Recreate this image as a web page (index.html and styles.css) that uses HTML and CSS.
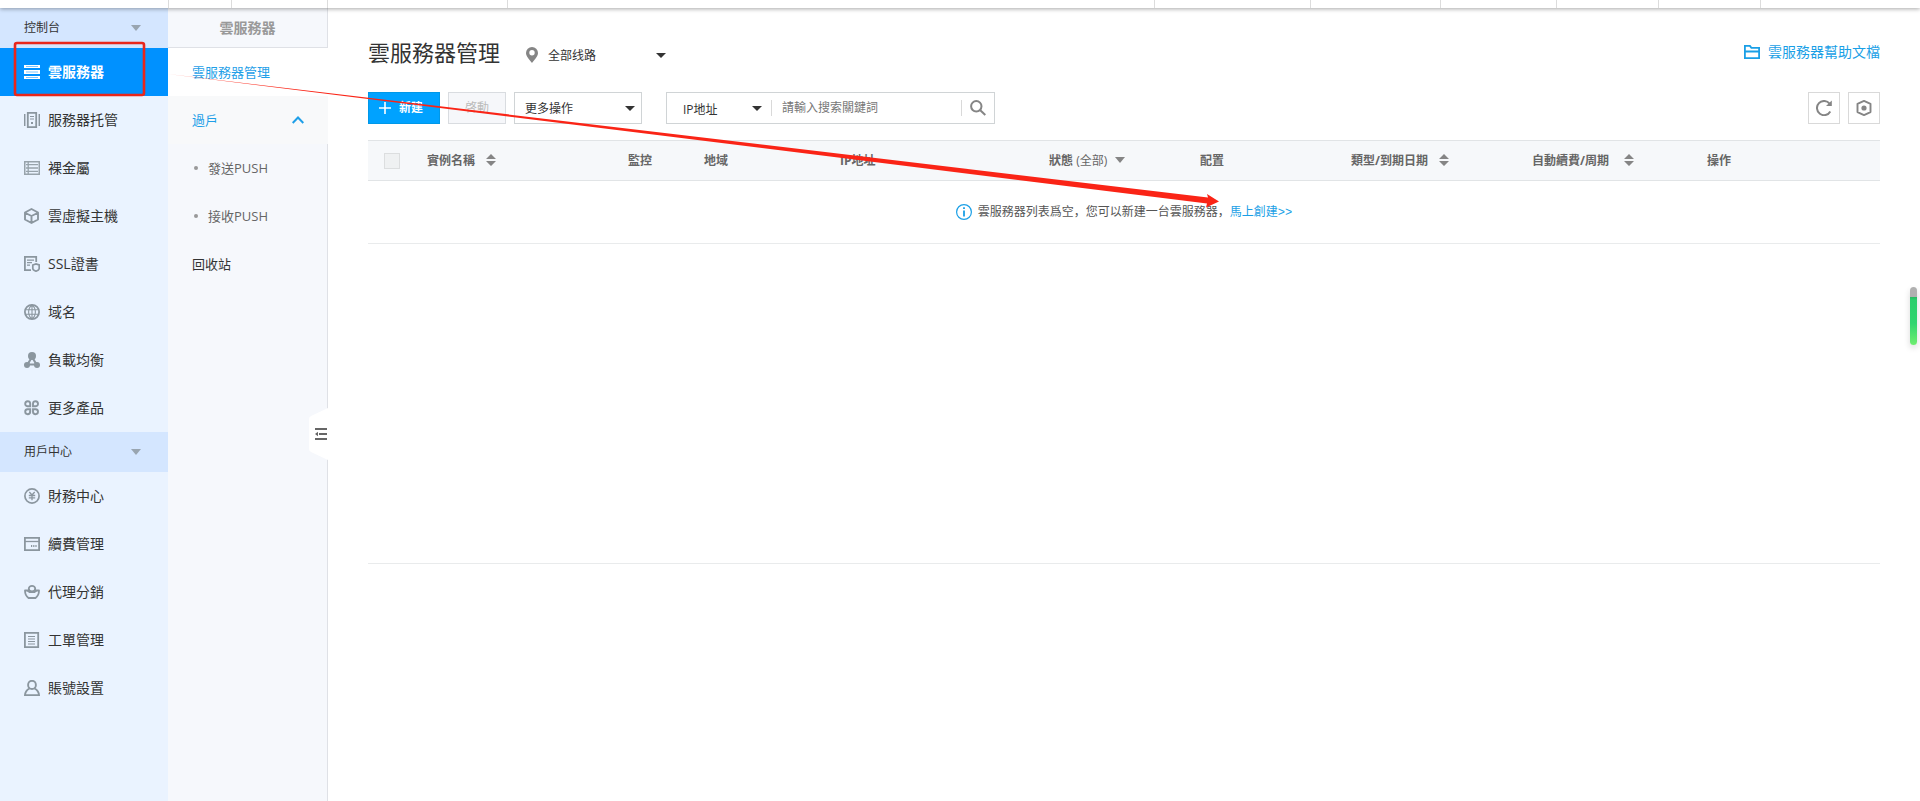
FILE: index.html
```html
<!DOCTYPE html>
<html lang="zh-Hans">
<head>
<meta charset="utf-8">
<title>雲服務器管理</title>
<link rel="stylesheet" href="styles.css">
</head>
<body>
<header class="topbar"><i></i><i></i><i></i><i></i><i></i><i></i><i></i><i></i><i></i><i></i></header>
<div class="shell">
  <nav class="sidebar" aria-label="控制台">
    <button class="group" type="button">控制台<svg width="10" height="6" viewBox="0 0 10 6"><path d="M0 0h10L5 6z"/></svg></button>
    <a class="item active" href="#"><svg class="ico" viewBox="0 0 16 16"><path fill="#fff" d="M0 1h16v3H0zM0 6h16v4H0zM0 12h16v3H0z"/><path stroke="#7cc5ff" d="M2 2.500h12M2 8h12M2 13.500h12"/></svg>雲服務器</a>
    <a class="item" href="#"><svg class="ico" viewBox="0 0 16 16"><path stroke-width="1.500" d="M.7 2v12M15.300 2v12"/><path stroke-width="1.800" d="M3.800.8h8.400v14.400H3.800z"/><path stroke-width="1.200" d="M6 4.500h4M6 7h4"/><path fill="#8b969f" stroke="none" d="M7 10h2v2H7z"/></svg>服務器托管</a>
    <a class="item" href="#"><svg class="ico" viewBox="0 0 16 16"><path stroke="#98a3ab" stroke-width="1.600" d="M.7 1.700h14.600v12.600H.7z"/><path stroke="#98a3ab" stroke-width="1.300" d="M2 4.700h12M2 8h12M2 11.300h12M4.200 2v12"/></svg>裸金屬</a>
    <a class="item" href="#"><svg class="ico" viewBox="0 0 16 16"><path stroke-width="1.900" stroke-linejoin="round" d="M7.500 1l6.500 3.500v7L7.500 15 1 11.500v-7zM1.500 5l6 3 6-3M7.500 8v6.500"/></svg>雲虛擬主機</a>
    <a class="item" href="#"><svg class="ico" viewBox="0 0 16 16"><path stroke-width="1.800" d="M12.200 6V.9H.9v13.300H7"/><path stroke-width="1.200" d="M3 4.200h7M3 6.700h5M3 9.200h3"/><path stroke-width="1.700" d="M8.800 9l3.200-1 3.200 1v3.500c0 1.200-1.200 2-3.200 2.700-2-.7-3.200-1.500-3.200-2.700z"/></svg>SSL證書</a>
    <a class="item" href="#"><svg class="ico" viewBox="0 0 16 16"><circle cx="8" cy="8" r="7.100" stroke-width="1.800"/><path stroke-width="1.100" d="M1 5.700h14M1 10.300h14M8 1v14M8 1C3.500 4.500 3.500 11.500 8 15M8 1c4.500 3.500 4.500 10.500 0 14"/></svg>域名</a>
    <a class="item" href="#"><svg class="ico" viewBox="0 0 16 16"><path stroke-width="2.100" d="M8 5L3.500 12.500h9z"/><g fill="#8b969f" stroke="none"><circle cx="8" cy="4" r="4"/><circle cx="3" cy="13" r="3"/><circle cx="13" cy="13" r="3"/></g></svg>負載均衡</a>
    <a class="item" href="#"><svg class="ico" viewBox="0 0 16 16"><path stroke-width="1.900" d="M6.200 6.200H3.500a2.500 2.500 0 1 1 2.700-2.700zM9 6.200V3.500a2.500 2.500 0 1 1 2.700 2.700zM6.200 9.200v2.700a2.500 2.500 0 1 1-2.700-2.700zM9 9.200h2.700A2.500 2.500 0 1 1 9 11.900z"/></svg>更多產品</a>
    <button class="group" type="button">用戶中心<svg width="10" height="6" viewBox="0 0 10 6"><path d="M0 0h10L5 6z"/></svg></button>
    <a class="item" href="#"><svg class="ico" viewBox="0 0 16 16"><circle cx="8" cy="8" r="7.100" stroke-width="1.700"/><path stroke-width="1.300" d="M5.300 4L8 7l2.700-3M8 7v5.300M4.800 7.500h6.400M4.800 9.800h6.400"/></svg>財務中心</a>
    <a class="item" href="#"><svg class="ico" viewBox="0 0 16 16"><path stroke-width="1.800" d="M.9 1.900h14.200v12.200H.9z"/><path stroke-width="1.300" d="M1 5.500h14"/><path stroke-width="1.800" stroke-dasharray="1.200 1" d="M7 10h6"/></svg>續費管理</a>
    <a class="item" href="#"><svg class="ico" viewBox="0 0 16 16"><path stroke-width="1.800" stroke-linejoin="round" d="M4.500 6.500H1c0 4 1.500 6 3.500 7.500h7c2-1.500 3.500-3.500 3.500-7.500h-3.500"/><path stroke-width="1.800" d="M8 1.800a3.200 2.800 0 1 1 0 5.600 3.200 2.800 0 1 1 0-5.600M3.500 6.500l2 1.500h5l2-1.500"/></svg>代理分銷</a>
    <a class="item" href="#"><svg class="ico" viewBox="0 0 16 16"><path stroke-width="1.800" d="M.9.900h13.300v14.200H.9z"/><path stroke-width="1.200" d="M4 4.500h7M4 7h7M4 9.500h7M4 12h7"/></svg>工單管理</a>
    <a class="item" href="#"><svg class="ico" viewBox="0 0 16 16"><ellipse cx="8" cy="4.900" rx="3.900" ry="4.100" stroke-width="1.900"/><path stroke-width="1.900" d="M5.500 8.500C2.500 10 1.200 12 1 15.100h14c-.2-3.100-1.500-5.100-4.500-6.600"/></svg>賬號設置</a>
  </nav>

  <nav class="subnav" aria-label="雲服務器">
    <h2 class="subnav-title">雲服務器</h2>
    <a class="sub current" href="#">雲服務器管理</a>
    <button class="sub open" type="button">過戶<svg width="12" height="8" viewBox="0 0 12 8"><path fill="none" stroke="#1f9fe8" stroke-width="2" d="M.7 7L6 1.500 11.300 7"/></svg></button>
    <a class="sub child" href="#">發送PUSH</a>
    <a class="sub child" href="#">接收PUSH</a>
    <a class="sub" href="#">回收站</a>
    <button class="collapse" type="button" aria-label="收起"><svg width="19" height="52" viewBox="0 0 19 52"><path fill="#fff" d="M19 0L2 8Q0 9 0 11v30q0 2 2 3l17 8z"/><path stroke="#666" stroke-width="1.800" d="M6 21h12M10 26h8M6 31h12"/><path fill="#666" d="M6 26l3-2.200v4.400z"/></svg></button>
  </nav>

  <main class="main">
    <div class="heading">
      <h1>雲服務器管理</h1>
      <div class="route">
        <svg width="12" height="16" viewBox="0 0 12 16"><path fill="#858585" fill-rule="evenodd" d="M6 0a6 6 0 0 1 6 6c0 3-3.500 7-6 10C3.500 13 0 9 0 6a6 6 0 0 1 6-6zm0 3a2.700 2.700 0 1 0 0 5.400A2.700 2.700 0 0 0 6 3z"/></svg>
        <div class="pick"><select aria-label="线路"><option>全部线路</option></select><svg width="10" height="5" viewBox="0 0 10 5"><path d="M0 0h10L5 5z"/></svg></div>
      </div>
      <a class="help" href="#"><svg width="16" height="14" viewBox="0 0 16 14"><path fill="none" stroke="#1a9fe6" stroke-width="1.800" d="M.9.900h5l1.500 2h7.700v10.200H.9zM1 6.500h14"/></svg>雲服務器幫助文檔</a>
    </div>

    <div class="toolbar">
      <button class="btn primary" type="button"><svg width="12" height="12" viewBox="0 0 12 12"><path stroke="#fff" stroke-width="1.600" d="M6 0v12M0 6h12"/></svg>新建</button>
      <button class="btn disabled" type="button" disabled>啓動</button>
      <div class="pick more"><select aria-label="更多操作"><option>更多操作</option></select><svg width="10" height="5" viewBox="0 0 10 5"><path d="M0 0h10L5 5z"/></svg></div>
      <form class="search">
        <div class="pick field"><select aria-label="搜索字段"><option>IP地址</option></select><svg width="10" height="5" viewBox="0 0 10 5"><path d="M0 0h10L5 5z"/></svg></div>
        <input type="text" aria-label="搜索" placeholder="請輸入搜索關鍵詞">
        <button type="button" aria-label="搜索"><svg width="16" height="16" viewBox="0 0 16 16"><g fill="none" stroke="#858585" stroke-width="2"><circle cx="6.300" cy="6.300" r="5.200"/><path d="M10 10l5.300 5"/></g></svg></button>
      </form>
      <div class="tools">
        <button type="button" aria-label="刷新"><svg width="16" height="16" viewBox="0 0 16 16"><path fill="none" stroke="#858585" stroke-width="2" d="M13.600 3.600A7.100 7.100 0 1 0 14.300 11.500"/><path fill="#858585" d="M15.800.5v5.500H10z"/></svg></button>
        <button type="button" aria-label="設置"><svg width="16" height="16" viewBox="0 0 16 16"><path fill="none" stroke="#858585" stroke-width="1.900" stroke-linejoin="round" d="M8 .9l6.500 3v8.200l-6.500 3-6.500-3V3.900z"/><circle cx="8" cy="8" r="2.600" fill="#858585"/></svg></button>
      </div>
    </div>

    <section class="panel">
      <table>
        <colgroup><col class="c1"><col class="c2"><col class="c3"><col class="c4"><col class="c5"><col class="c6"><col class="c7"><col class="c8"><col class="c9"><col></colgroup>
        <thead>
          <tr>
            <th><input type="checkbox" aria-label="全選" disabled></th>
            <th>實例名稱<svg class="sort" width="10" height="12" viewBox="0 0 10 12"><path d="M0 5l5-5 5 5zM0 7h10l-5 5z"/></svg></th>
            <th>監控</th>
            <th>地域</th>
            <th>IP地址</th>
            <th>狀態 <span>(全部)</span><svg class="drop" width="10" height="6" viewBox="0 0 10 6"><path d="M0 0h10L5 6z"/></svg></th>
            <th>配置</th>
            <th>類型/到期日期<svg class="sort" width="10" height="12" viewBox="0 0 10 12"><path d="M0 5l5-5 5 5zM0 7h10l-5 5z"/></svg></th>
            <th>自動續費/周期<svg class="sort wide" width="10" height="12" viewBox="0 0 10 12"><path d="M0 5l5-5 5 5zM0 7h10l-5 5z"/></svg></th>
            <th>操作</th>
          </tr>
        </thead>
        <tbody>
          <tr><td colspan="10"><div class="empty"><svg width="16" height="16" viewBox="0 0 16 16"><circle cx="8" cy="8" r="7.400" fill="none" stroke="#1a9fe6" stroke-width="1.200"/><path stroke="#1a9fe6" stroke-width="1.800" d="M8 3.200v1.900M8 6.500v6"/></svg><p>雲服務器列表爲空，您可以新建一台雲服務器，<a href="#">馬上創建<span class="more-mark">&gt;&gt;</span></a></p></div></td></tr>
        </tbody>
      </table>
    </section>
  </main>
</div>

<svg class="marks" width="1240" height="230" viewBox="0 0 1240 230" aria-hidden="true">
  <rect x="15" y="43" width="129" height="52" rx="2" fill="none" stroke="#e8261c" stroke-width="2.600"/>
  <path fill="#fa2416" d="M168 74L1208 197.500 1207 194 1219 201.500 1206 207.500 1207 203.500z"/>
</svg>
<div class="meter" aria-hidden="true"></div>
</body>
</html>
```
FILE: styles.css
```css
* { box-sizing: border-box; }
body {
  margin: 0;
  min-height: 100vh;
  display: flex;
  flex-direction: column;
  position: relative;
  background: #fff;
  color: #333;
  font-family: "Open Sans", "Noto Sans CJK SC", sans-serif;
  font-size: 12px;
  line-height: 20px;
}
a { color: inherit; text-decoration: none; }
button, input, select { font: inherit; color: inherit; margin: 0; }
button { cursor: pointer; }
h1, h2, p { margin: 0; font-weight: 400; }
svg { flex: none; display: block; }

.topbar {
  position: relative;
  z-index: 2;
  height: 8px;
  display: grid;
  grid-template-columns: 169px 63px 96px 180px 1fr 156px 130px 116px 102px 102px 159px;
  background: #fff;
  box-shadow: 0 1px 4px rgba(0, 0, 0, .35);
}
.topbar i { border-right: 1px solid #dcdcdc; }

.shell { flex: 1; display: flex; }

.sidebar { width: 168px; background: #eaf3ff; }
.group {
  width: 100%;
  height: 40px;
  padding: 0 27px 0 24px;
  border: 0;
  display: flex;
  align-items: center;
  justify-content: space-between;
  background: #d4e6ff;
}
.group svg { fill: #99a5b0; }
.item {
  height: 48px;
  padding-left: 24px;
  display: flex;
  align-items: center;
  gap: 8px;
  font-size: 14px;
}
.item.active { background: #0091ff; color: #fff; font-weight: 700; }
.ico { width: 16px; height: 16px; fill: none; stroke: #8b969f; }
.active .ico { stroke: none; }

.subnav {
  position: relative;
  width: 160px;
  border-right: 1px solid #dfe1e6;
  background: #f6f8fc;
  font-size: 13px;
}
.subnav-title {
  height: 40px;
  border-bottom: 1px solid #dfe1e6;
  font-size: 14px;
  font-weight: 700;
  line-height: 40px;
  text-align: center;
  color: #999;
}
.sub {
  height: 48px;
  padding: 0 24px;
  display: flex;
  align-items: center;
  justify-content: space-between;
}
.sub.current { margin-right: -1px; background: #fff; color: #1f9fe8; }
.sub.open { width: 160px; border: 0; background: #f8f9fa; color: #1f9fe8; }
.sub.child { justify-content: flex-start; gap: 10px; padding-left: 26px; color: #666; }
.sub.child::before { content: ""; width: 4px; height: 4px; border-radius: 50%; background: #999; }
.collapse {
  position: absolute;
  top: 400px;
  right: -1px;
  padding: 0;
  border: 0;
  background: none;
}

.main { flex: 1; min-width: 0; padding: 24px 40px; }
.heading { height: 40px; margin-bottom: 20px; display: flex; align-items: center; }
.heading h1 { font-size: 22px; line-height: 40px; }
.route { display: flex; align-items: center; gap: 10px; margin-left: 26px; padding-top: 6px; }
.help { margin-left: auto; display: flex; align-items: center; gap: 8px; font-size: 14px; color: #1a9fe6; }

.pick { position: relative; }
.pick select {
  appearance: none;
  width: 100%;
  height: 30px;
  padding: 2px 0 0;
  border: 0;
  background: none;
}
.pick svg { position: absolute; right: 6px; top: 13px; fill: #333; pointer-events: none; }
.route .pick { width: 124px; }

.toolbar { display: flex; align-items: center; gap: 8px; margin-bottom: 16px; }
.btn { height: 32px; border: 1px solid #d9dce0; display: flex; align-items: center; justify-content: center; }
.primary {
  width: 72px;
  padding: 0 10px;
  gap: 8px;
  justify-content: flex-start;
  border-color: #0098e8;
  background: #00a2ff;
  color: #fff;
  font-weight: 700;
}
.disabled { width: 58px; background: #f6f7fa; color: #bbb; }
.more { width: 128px; border: 1px solid #d0d4d6; }
.more select { padding-left: 10px; }
.search {
  width: 329px;
  height: 32px;
  margin-left: 16px;
  border: 1px solid #d0d4d6;
  display: flex;
  align-items: center;
}
.field { width: 105px; border-right: 1px solid #d9d9d9; height: 16px; }
.pick.field select { height: 16px; padding: 0 0 0 16px; line-height: 16px; }
.field svg { top: 6px; right: 9px; }
.search input {
  flex: 1;
  min-width: 0;
  height: 16px;
  padding: 0 10px;
  border: 0;
  border-right: 1px solid #d9d9d9;
  outline: 0;
  background: none;
}
.search input::placeholder { color: #777; opacity: 1; }
.search button { padding: 0 8px; border: 0; background: none; }
.tools { margin-left: auto; display: flex; gap: 8px; }
.tools button {
  width: 32px;
  height: 32px;
  padding: 0;
  border: 1px solid #d9d9d9;
  display: grid;
  place-items: center;
  background: #fff;
}

.panel { min-height: 424px; border-bottom: 1px solid #e9ebec; }
table { width: 100%; border-collapse: separate; border-spacing: 0; table-layout: fixed; }
.c1 { width: 51px; }
.c2 { width: 201px; }
.c3 { width: 76px; }
.c4 { width: 136px; }
.c5 { width: 209px; }
.c6 { width: 151px; }
.c7 { width: 151px; }
.c8 { width: 181px; }
.c9 { width: 175px; }
th {
  height: 41px;
  padding: 0 0 0 8px;
  border: solid #e1e4e6;
  border-width: 1px 0;
  background: #f6f8fa;
  text-align: left;
  color: #666;
  white-space: nowrap;
}
th span { font-weight: 400; }
th svg { display: inline-block; vertical-align: middle; fill: #858585; }
.sort { margin: 0 0 3px 11px; }
.wide { margin-left: 15px; }
.drop { margin: 0 0 2px 8px; }
th:first-child { padding-left: 16px; }
th input {
  appearance: none;
  display: block;
  width: 16px;
  height: 16px;
  border: 1px solid #dcdedf;
  background: #eff1f2;
}
td { height: 63px; padding: 0; border-bottom: 1px solid #e9ebec; }
.empty { display: flex; align-items: center; justify-content: center; gap: 6px; color: #555; }
.empty a { color: #1a9fe6; }
.more-mark { font-family: "Liberation Mono", monospace; }

.marks { position: absolute; left: 0; top: 0; z-index: 3; pointer-events: none; }
.meter {
  position: absolute;
  right: 3px;
  top: 287px;
  z-index: 3;
  width: 7px;
  height: 58px;
  border-radius: 4px;
  background: linear-gradient(#b0b0b0 10px, #27b860 10px, #2bcf6c 13px, #2fd56f 36px, #6fee70);
  box-shadow: 0 3px 6px rgba(0, 0, 0, .15);
}
```
